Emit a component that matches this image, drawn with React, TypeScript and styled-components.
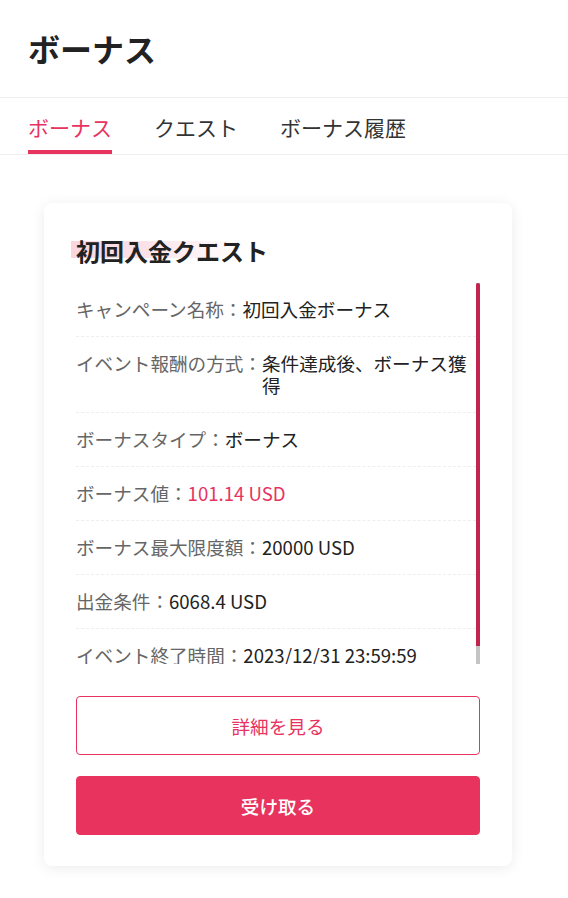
import React, { useLayoutEffect, useRef, useState } from 'react'
import styled, { createGlobalStyle } from 'styled-components'

const GlobalStyle = createGlobalStyle`
  html, body {
    margin: 0;
    padding: 0;
    background: #fff;
  }
  body {
    font-family: "Noto Sans CJK JP", "Noto Sans", sans-serif;
    color: #222;
  }
`

const ACCENT = '#e8335f'

interface Item {
  label: string
  value: string
  highlight?: boolean
}

const items: Item[] = [
  { label: 'キャンペーン名称：', value: '初回入金ボーナス' },
  { label: 'イベント報酬の方式：', value: '条件達成後、ボーナス獲得' },
  { label: 'ボーナスタイプ：', value: 'ボーナス' },
  { label: 'ボーナス値：', value: '101.14 USD', highlight: true },
  { label: 'ボーナス最大限度額：', value: '20000 USD' },
  { label: '出金条件：', value: '6068.4 USD' },
  { label: 'イベント終了時間：', value: '2023/12/31 23:59:59' },
]

const tabs = ['ボーナス', 'クエスト', 'ボーナス履歴']

function InfoList() {
  const listRef = useRef<HTMLDivElement>(null)
  const [thumb, setThumb] = useState({ top: 0, height: 0 })

  const measure = () => {
    const el = listRef.current
    if (!el) return
    const { clientHeight, scrollHeight, scrollTop } = el
    setThumb({
      height: (clientHeight * clientHeight) / scrollHeight,
      top: (scrollTop * clientHeight) / scrollHeight,
    })
  }

  useLayoutEffect(measure, [])

  return (
    <ListWrap>
      <List ref={listRef} onScroll={measure}>
        {items.map(item => (
          <Row key={item.label}>
            <Label>{item.label}</Label>
            <Value highlight={item.highlight}>{item.value}</Value>
          </Row>
        ))}
      </List>
      <ScrollTrack>
        <ScrollThumb style={{ top: thumb.top, height: thumb.height }} />
      </ScrollTrack>
    </ListWrap>
  )
}

export default function App() {
  return (
    <Page>
      <GlobalStyle />
      <Header>
        <PageTitle>ボーナス</PageTitle>
      </Header>
      <TabBar>
        {tabs.map((t, i) => (
          <Tab key={t} active={i === 0}>
            {t}
          </Tab>
        ))}
      </TabBar>
      <Card>
        <CardTitle>初回入金クエスト</CardTitle>
        <InfoList />
        <Actions>
          <Button variant="outline">詳細を見る</Button>
          <Button variant="solid">受け取る</Button>
        </Actions>
      </Card>
    </Page>
  )
}

const Page = styled.div`
  width: 568px;
  min-height: 898px;
  padding-bottom: 30px;
`

const Header = styled.header`
  height: 98px;
  padding: 0 28px;
  display: flex;
  align-items: center;
  border-bottom: 1px solid #eee;
  box-sizing: border-box;
`

const PageTitle = styled.h1`
  margin: 0 0 2px;
  font-size: 32px;
  line-height: 40px;
  font-weight: 700;
  color: #222;
`

const TabBar = styled.nav`
  display: flex;
  gap: 42px;
  padding: 0 28px;
  border-bottom: 1px solid #eee;
`

const Tab = styled.div<{ active?: boolean }>`
  padding-top: 15px;
  padding-bottom: 9px;
  font-size: 21px;
  line-height: 28px;
  color: ${({ active }) => (active ? ACCENT : '#333')};
  border-bottom: 4px solid ${({ active }) => (active ? ACCENT : 'transparent')};
`

const Card = styled.section`
  width: 468px;
  margin: 48px 0 0 44px;
  padding: 32px 32px 31px;
  box-sizing: border-box;
  background: #fff;
  border-radius: 8px;
  box-shadow: 0 2px 14px rgba(0, 0, 0, 0.08);
`

const CardTitle = styled.h2`
  display: inline-block;
  margin: 0 0 16px -5px;
  padding-left: 5px;
  font-size: 24px;
  line-height: 32px;
  font-weight: 700;
  color: #222;
  background: linear-gradient(
      90deg,
      rgba(232, 51, 95, 0.2),
      rgba(232, 51, 95, 0.15) 35%,
      rgba(232, 51, 95, 0.05) 70%,
      rgba(232, 51, 95, 0) 90%
    )
    no-repeat left 6px / 100% 17px;
`

const ListWrap = styled.div`
  position: relative;
`

const List = styled.div`
  height: 381px;
  margin-right: 4px;
  overflow-y: auto;
  scrollbar-width: none;

  &::-webkit-scrollbar {
    display: none;
  }
`

const ScrollTrack = styled.div`
  position: absolute;
  top: 0;
  right: 0;
  bottom: 0;
  width: 4px;
  background: #c4c4c4;
`

const ScrollThumb = styled.div`
  position: absolute;
  left: 0;
  width: 4px;
  border-radius: 2px 2px 0 0;
  background: #c2244f;
`

const Row = styled.div`
  display: flex;
  padding: 15px 0 16px;
  font-size: 18.6px;
  line-height: 22px;
  border-bottom: 1px dashed #eee;
`

const Label = styled.span`
  flex: none;
  color: #666;
`

const Value = styled.span<{ highlight?: boolean }>`
  flex: 1;
  color: ${({ highlight }) => (highlight ? ACCENT : '#222')};
`

const Actions = styled.div`
  display: flex;
  flex-direction: column;
  gap: 21px;
  margin-top: 32px;
`

const Button = styled.button<{ variant: 'outline' | 'solid' }>`
  height: 59px;
  border-radius: 4px;
  font-family: inherit;
  font-size: 18.6px;
  cursor: pointer;
  border: 1px solid ${ACCENT};
  background: ${({ variant }) => (variant === 'solid' ? ACCENT : '#fff')};
  color: ${({ variant }) => (variant === 'solid' ? '#fff' : ACCENT)};
  font-weight: ${({ variant }) => (variant === 'solid' ? 500 : 400)};
`
